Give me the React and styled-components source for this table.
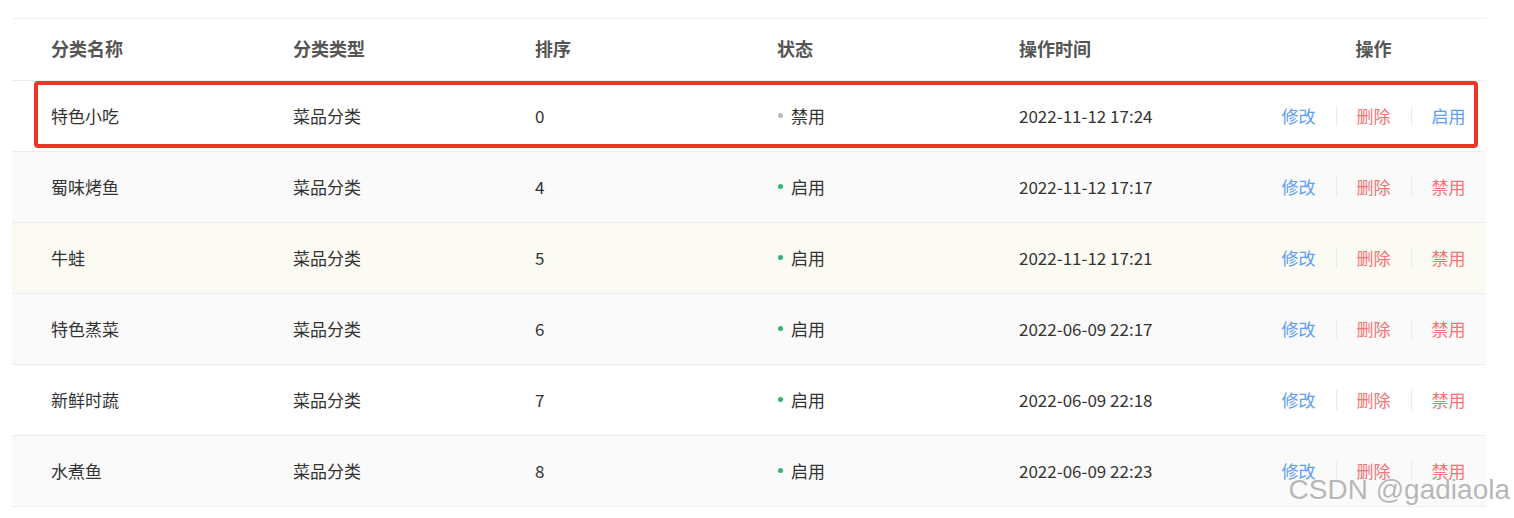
import React from "react";
import styled, { createGlobalStyle } from "styled-components";

const GlobalStyle = createGlobalStyle`
  body {
    margin: 0;
    background: #fff;
    font-family: "Noto Sans CJK SC", "Noto Sans", sans-serif;
  }
`;

const rows = [
  { name: "特色小吃", type: "菜品分类", sort: 0, on: false, time: "2022-11-12 17:24", marked: true },
  { name: "蜀味烤鱼", type: "菜品分类", sort: 4, on: true, time: "2022-11-12 17:17" },
  { name: "牛蛙", type: "菜品分类", sort: 5, on: true, time: "2022-11-12 17:21", hover: true },
  { name: "特色蒸菜", type: "菜品分类", sort: 6, on: true, time: "2022-06-09 22:17" },
  { name: "新鲜时蔬", type: "菜品分类", sort: 7, on: true, time: "2022-06-09 22:18" },
  { name: "水煮鱼", type: "菜品分类", sort: 8, on: true, time: "2022-06-09 22:23" },
];

const App = () => (
  <Page>
    <GlobalStyle />
    <Table>
      <HeadRow>
        <Cell>分类名称</Cell>
        <Cell>分类类型</Cell>
        <Cell>排序</Cell>
        <Cell>状态</Cell>
        <Cell>操作时间</Cell>
        <ActionCell>操作</ActionCell>
      </HeadRow>
      {rows.map((r, i) => (
        <Row key={r.name} striped={i % 2 === 1} hover={r.hover}>
          <Cell>{r.name}</Cell>
          <Cell>{r.type}</Cell>
          <Cell>{r.sort}</Cell>
          <Status on={r.on}>{r.on ? "启用" : "禁用"}</Status>
          <Cell>{r.time}</Cell>
          <ActionCell>
            <Actions>
              <ActionLink tone="blue">修改</ActionLink>
              <ActionLink tone="red">删除</ActionLink>
              <ActionLink tone={r.on ? "red" : "blue"}>{r.on ? "禁用" : "启用"}</ActionLink>
            </Actions>
          </ActionCell>
          {r.marked && <Marker />}
        </Row>
      ))}
    </Table>
    <Watermark>CSDN @gadiaola</Watermark>
  </Page>
);

export default App;

const Page = styled.div`
  position: relative;
  width: 1514px;
  height: 518px;
  padding: 18px 28px 0 12px;
  box-sizing: border-box;
  overflow: hidden;
`;

const Table = styled.div`
  border-top: 1px solid #f0f0f0;
`;

const RowBase = styled.div`
  position: relative;
  display: grid;
  grid-template-columns: 242px 242px 242px 242px 242px 1fr;
  align-items: center;
  padding-left: 39px;
  box-sizing: border-box;
  border-bottom: 1px solid #ebeef5;
  line-height: 24px;
`;

const HeadRow = styled(RowBase)`
  height: 62px;
  font-size: 18px;
  font-weight: 700;
  color: #555;
  padding-bottom: 3px;
`;

const Row = styled(RowBase)`
  height: 71px;
  font-size: 17px;
  color: #333;
  padding-bottom: 1px;
  background: ${(p) => (p.hover ? "#fbfbf4" : p.striped ? "#fafafa" : "#fff")};
`;

const Cell = styled.div`
  white-space: nowrap;
`;

const ActionCell = styled.div`
  display: flex;
  justify-content: center;
`;

const Status = styled.div`
  display: flex;
  align-items: center;
  gap: 8px;
  white-space: nowrap;
  &::before {
    content: "";
    width: 5px;
    height: 5px;
    margin-left: 1px;
    border-radius: 50%;
    background: ${(p) => (p.on ? "#2fb673" : "#b8b8b8")};
  }
`;

const Actions = styled.div`
  display: flex;
  align-items: center;
`;

const ActionLink = styled.span`
  color: ${(p) => (p.tone === "red" ? "#f27474" : "#5d9cf8")};
  padding: 0 20px;
  line-height: 20px;
  border-left: 1px solid #e8ebf0;
  &:first-child {
    border-left: none;
    padding-left: 0;
  }
  &:last-child {
    padding-right: 0;
  }
`;

const Marker = styled.div`
  position: absolute;
  left: 22px;
  right: 8px;
  top: 0;
  bottom: 3px;
  border: 4px solid #ee3526;
  border-radius: 4px;
  pointer-events: none;
`;

const Watermark = styled.div`
  position: absolute;
  right: 4px;
  bottom: 12px;
  font-family: "Liberation Sans", Arial, sans-serif;
  font-size: 28px;
  color: rgba(170, 170, 170, 0.85);
  text-shadow: 1px 1px 1px #fff;
`;
